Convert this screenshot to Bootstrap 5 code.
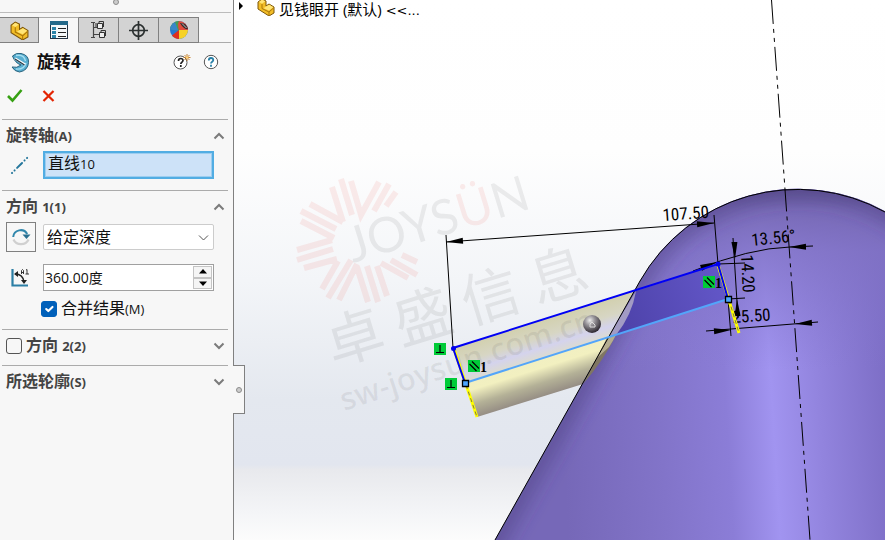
<!DOCTYPE html>
<html lang="zh-CN">
<head>
<meta charset="utf-8">
<meta name="viewport" content="width=device-width, initial-scale=1">
<title>旋转4</title>
<link href="https://cdn.jsdelivr.net/npm/bootstrap@5.3.0/dist/css/bootstrap.min.css" rel="stylesheet">
<style>
body{font-family:"Open Sans","Noto Sans CJK SC",sans-serif;font-size:16px;line-height:24px;color:#111;background:#fff}
svg{display:block}
.pm{flex:0 0 234px;background:#f7f7f7;border-right:1px solid #808080;z-index:1}
.grip{height:13px;margin-right:2px;border-bottom:1px solid #bcbcbc}
.dot{width:6px;height:6px;border-radius:50%;background:#ccc;border:1px solid #8c8c8c}
.grip .dot{margin-top:-1px}
.tabs{margin:4px 2px 0 0;border-bottom:1px solid #ababab}
.tabs button{width:40px;height:26px;margin-bottom:-1px;padding:0;border:1px solid #808080;border-left:0;background:#d3d3d3}
.tabs button:first-child{width:39px}
.tabs .on{background:#f7f7f7;border-bottom-color:#f7f7f7;border-top-color:#aaa}
.feat{padding:0 14px 0 10px;height:38px}
.feat h1{font-size:17px;line-height:24px;margin:0 0 0 7px;font-weight:700;color:#111}
.plain{border:0;background:none;padding:0}
.newhelp{margin-right:12px}
.acts{padding:7px 0 0 7px;height:38px}
.sec{margin:0 5px 0 2px;border-top:1px solid #ababab}
.sec .head{height:31px;padding:0 3px 0 4px;color:#444;font-weight:700;font-size:16px;width:100%;text-align:left}
.sm{font-size:13px}
.line{padding:0 14px 0 4px}
.tool{width:30px;height:30px;border:1px solid #808080;background:#f7f7f7;padding:0}
.ico{flex:0 0 30px}
.field{margin-left:7px;min-width:0}
.pick{height:28px;border:2px solid #52ade3;box-shadow:inset 0 0 0 1px #9ccdf0;background:#cde2f8;padding:0 3px;line-height:20px}
.below{padding-bottom:11px}
.form-select.depth{height:26px;border:1px solid #ccc;border-radius:2px;padding:0 24px 0 3px;font-size:16px;line-height:22px;color:#111;background-size:11px 11px;background-position:right 4px center;background-image:url("data:image/svg+xml,%3csvg xmlns='http://www.w3.org/2000/svg' viewBox='0 0 11 11'%3e%3cpath d='M1 3.500l4.500 4.500L10 3.500' fill='none' stroke='%23555'/%3e%3c/svg%3e")}
.spin{height:27px;border:1px solid #a0a0a0;background:#fff}
.spin input{border:0;background:none;min-width:0;padding:0 1px;font-size:14px;color:#111}
.spin .steps{width:21px;padding:1px}
.spin .steps button{height:12px;border:1px solid #c4c4c4;background:#f5f5f5;padding:0;line-height:1}
.form-check-input.box{width:16px;height:16px;margin:0;border:1px solid #555;border-radius:3px;background-color:#f7f7f7}
.form-check-input.box:checked{background-color:#0060ba;border-color:#0060ba}
.merge{padding:5px 0 8px 39px}
.flap{top:365px;right:-12px;width:12px;height:49px;background:#f7f7f7;border:1px solid #808080;border-left:0}
.tree{top:0;left:4px;font-size:15px;line-height:18px;color:#000;white-space:nowrap}
.tree .name{margin-left:4px}
.tree .more{font-family:"DejaVu Sans",sans-serif;font-size:13px}
.tree .piece{margin:0 0 0 13px}
.view{background:linear-gradient(#fff 0,#fefefe 28%,#f3f5f8 52%,#e4e8ef 74%,#e2e6ef 86%,#e8e9ed 87%,#f4f5f7 95%,#fcfcfc 100%);min-width:0}
.dim{font-family:"Liberation Sans Narrow","Roboto Condensed","DejaVu Sans Condensed",sans-serif;font-size:17px;fill:#000}
</style>
</head>
<body>
<svg width="0" height="0" class="position-absolute" aria-hidden="true">
<symbol id="part" viewBox="0 0 18 18"><path d="M1 4l4-3 4 2v5l3-2 5 3v6l-5 3L1 11z" fill="#f2bd27" stroke="#7d5608"/><path d="M2 4l3-2.300 3.300 1.500L5 5.700zM6.500 10.200l3-2 2.800-1.400 4 2.400-4.300 3.300z" fill="#ffe577"/><path d="M5 6v4.500l7 3.500v3.500M12 14l4.500-4" fill="none" stroke="#a97608"/></symbol>
<symbol id="up" viewBox="0 0 12 8"><path d="M1.500 6.500L6 2l4.500 4.500" fill="none" stroke="#7b7b7b" stroke-width="2"/></symbol>
<symbol id="down" viewBox="0 0 12 8"><path d="M1.500 1.500L6 6l4.500-4.500" fill="none" stroke="#7b7b7b" stroke-width="2"/></symbol>
</svg>
<div class="d-flex vh-100 overflow-hidden">
<aside class="pm position-relative">
  <div class="grip d-flex justify-content-center"><span class="dot"></span></div>
  <div class="tabs d-flex" role="tablist">
    <button role="tab" aria-label="设计树"><svg class="mx-auto" width="19" height="19"><use href="#part"/></svg></button>
    <button role="tab" class="on" aria-label="属性"><svg class="mx-auto" width="20" height="20" viewBox="0 0 20 20"><rect x="1.500" y="1.500" width="17" height="17" fill="#f4f8fa" stroke="#234"/><path d="M1 1h18v4H1z" fill="#23698a"/><path d="M3 7h4v3H3zM3 11h4v3H3zM3 15h4v3H3z" fill="#2b83a8"/><path d="M9 8.500h8M9 12.500h8M9 16.500h8" stroke="#222"/></svg></button>
    <button role="tab" aria-label="配置"><svg class="mx-auto" width="18" height="20" viewBox="0 0 18 20"><path d="M1 2.500h4M1 17.500h4M3.500 2v16M3.500 7.500h5M3.500 14.500h6M6 3v4" fill="none" stroke="#444" stroke-width="1.200"/><path d="M7.500 3.500h5v5h-5zM9.500 12.500h5v5h-5z" fill="#eee" stroke="#333"/><path d="M9 3V1.500h4.500V7M11 12v-1.500h4.500V16" fill="none" stroke="#333"/></svg></button>
    <button role="tab" aria-label="尺寸"><svg class="mx-auto" width="19" height="19" viewBox="0 0 19 19"><circle cx="9.500" cy="9.500" r="5.800" fill="none" stroke="#2b3030" stroke-width="1.700"/><path d="M9.500 0v19M0 9.500h19" stroke="#2b3030" stroke-width="1.700"/></svg></button>
    <button role="tab" aria-label="外观"><svg class="mx-auto" width="20" height="20" viewBox="0 0 20 20"><circle cx="10" cy="10" r="9" fill="#2879d0"/><path d="M10 1a9 9 0 0 0-9 8q5 2 9 1z" fill="#4a9b53"/><path d="M6 2q-4 2-5 7 4 2 8 1z" fill="#3a86c8"/><path d="M10 1a9 9 0 0 1 9 9l-9 0Q8 5 10 1z" fill="#e14b3b"/><path d="M19 10a9 9 0 0 1-9 9V10z" fill="#f6d226"/><path d="M3 15.500a9 9 0 0 0 7 3.500v-9z" fill="#e02f1e"/><path d="M11 3q6-1 8 6-4 1-8-6z" fill="#392b2b"/><path d="M13 3.500l4.500 4.500" stroke="#bbb"/></svg></button>
  </div>
  <div class="feat d-flex align-items-center">
    <svg width="20" height="21" viewBox="0 0 20 21"><path d="M2.500 4Q6 .5 11 1.500q8 1.500 7.500 9-.5 8-9 9.500-5-.5-7.500-5 5 1.500 9-2Q5 11 2.500 4z" fill="#58aed0" stroke="#28627d"/><path d="M6 3.500q8-1.500 9.500 5.500M6 17q8 1 10-6" fill="none" stroke="#a5def0" stroke-width="1.300"/><path d="M5 6.500l10 6" stroke="#fff" stroke-width="2.500"/><path d="M5 7l9.500 6" stroke="#263642" stroke-width="1.200"/></svg>
    <h1>旋转4</h1>
    <button class="plain newhelp ms-auto" aria-label="新增帮助"><svg width="18" height="18" viewBox="0 0 18 18"><circle cx="7.500" cy="9.500" r="6.500" fill="#fff" stroke="#555"/><path d="M5.500 8q0-2.500 2.200-2.500T10 7.500c0 1.500-2.200 1.700-2.200 3.500M7.800 12v2" fill="none" stroke="#222" stroke-width="1.700"/><path d="M14 1v7M10.500 4.500h7M11.500 2l5 5M16.500 2l-5 5" stroke="#bd7420" stroke-width=".9"/><circle cx="14" cy="4.500" r="1.300" fill="#ffd37a"/></svg></button>
    <button class="plain" aria-label="帮助"><svg width="16" height="16" viewBox="0 0 16 16"><circle cx="8" cy="8" r="6.700" fill="#fff" stroke="#555"/><path d="M5.800 6.500Q5.800 4 8 4t2.300 2.100C10.300 7.600 8 7.800 8 9.500M8 10.700v2" fill="none" stroke="#2980a7" stroke-width="1.800"/></svg></button>
  </div>
  <div class="acts d-flex align-items-start">
    <button class="plain" aria-label="确定"><svg width="16" height="15" viewBox="0 0 16 15"><path d="M1 8l4.500 4.500L14.500 2" fill="none" stroke="#36a012" stroke-width="2.600"/></svg></button>
    <button class="plain ms-3" aria-label="取消"><svg width="18" height="15" viewBox="0 0 18 15"><path d="M4.500 3l10 10M14.500 3l-10 10" stroke="#e32402" stroke-width="2.200"/></svg></button>
  </div>

  <section class="sec below">
    <button class="plain head d-flex align-items-center"><span>旋转轴<span class="sm">(A)</span></span><svg class="ms-auto" width="12" height="8"><use href="#up"/></svg></button>
    <div class="line d-flex align-items-center">
      <span class="ico"><svg class="ms-1" width="20" height="20" viewBox="0 0 20 20"><path d="M2 18L19 1" stroke="#25779c" stroke-width="2" stroke-linecap="round" stroke-dasharray=".1 3.500 .1 3.500 7 3.500 .1 3.500 .1 9"/></svg></span>
      <div class="field pick flex-fill" role="listbox" tabindex="0" aria-label="旋转轴"><span role="option" aria-selected="true">直线<span class="sm">10</span></span></div>
    </div>
  </section>

  <section class="sec">
    <button class="plain head d-flex align-items-center"><span>方向 <span class="sm">1(1)</span></span><svg class="ms-auto" width="12" height="8"><use href="#up"/></svg></button>
    <div class="line d-flex align-items-center">
      <button class="tool flex-shrink-0" aria-label="反向"><svg class="mx-auto" width="20" height="20" viewBox="0 0 20 20"><path d="M2.500 12.500a8 7 0 0 0 15 0" fill="none" stroke="#d0d0d0" stroke-width="2.200"/><path d="M2.200 10a7.500 7.500 0 0 1 14-3" fill="none" stroke="#3187ac" stroke-width="2"/><path d="M11.500 7.500h8l-4 4.500z" fill="#2a6f90"/></svg></button>
      <select class="form-select depth field flex-fill w-auto" aria-label="终止条件"><option>给定深度</option></select>
    </div>
    <div class="line d-flex align-items-center mt-2 pt-1">
      <label class="ico" for="ang" aria-label="角度"><svg class="ms-1" width="20" height="20" viewBox="0 0 20 20"><path d="M2.500 1v16.500H18" fill="none" stroke="#2c7fa5" stroke-width="2.200"/><path d="M5 6q8 0 9 8" fill="none" stroke="#222" stroke-width="1.500"/><path d="M4 6l4-3v6zM11 12h6l-3 4z" fill="#222"/><path d="M11.500 6V2.500l1-1 1 1V6M11.500 4.500h2M16 2l1-.5V6M15.500 6H19" fill="none" stroke="#222" stroke-width=".9"/></svg></label>
      <div class="field spin d-flex flex-fill">
        <input id="ang" class="flex-fill w-100" type="text" value="360.00度">
        <div class="steps d-flex flex-column flex-shrink-0 justify-content-between"><button aria-label="增加"><svg class="mx-auto" width="8" height="5"><path d="M0 4.500L4 0l4 4.500z"/></svg></button><button aria-label="减少"><svg class="mx-auto" width="8" height="5"><path d="M0 .5L4 5 8 .5z"/></svg></button></div>
      </div>
    </div>
    <div class="merge d-flex align-items-center"><input class="form-check-input box" type="checkbox" id="merge" checked><label class="ms-1" for="merge">合并结果<span class="sm">(M)</span></label></div>
  </section>

  <section class="sec pb-1">
    <div class="head d-flex align-items-center"><input class="form-check-input box" type="checkbox" id="dir2"><label class="ms-1" for="dir2">方向 <span class="sm">2(2)</span></label><button class="plain ms-auto" aria-label="展开方向 2"><svg width="12" height="8"><use href="#down"/></svg></button></div>
  </section>
  <section class="sec">
    <button class="plain head d-flex align-items-center"><span>所选轮廓<span class="sm">(S)</span></span><svg class="ms-auto" width="12" height="8"><use href="#down"/></svg></button>
  </section>
  <div class="flap position-absolute d-flex align-items-center justify-content-center"><span class="dot"></span></div>
</aside>

<main class="view flex-fill position-relative">
<svg class="w-100 h-100" viewBox="234 0 651 540" preserveAspectRatio="xMinYMin slice" role="img" aria-label="旋转预览">
<defs>
<linearGradient id="bodyFill" gradientUnits="userSpaceOnUse" x1="560" y1="400" x2="890" y2="380"><stop offset="0" stop-color="#7668b8"/><stop offset=".3" stop-color="#8274c9"/><stop offset=".5" stop-color="#8b7dd7"/><stop offset=".64" stop-color="#a194f0"/><stop offset=".78" stop-color="#9284de"/><stop offset="1" stop-color="#7c6dc5"/></linearGradient>
<linearGradient id="dome" gradientUnits="userSpaceOnUse" x1="780" y1="188" x2="780" y2="370"><stop offset="0" stop-color="#63589a"/><stop offset=".12" stop-color="#7668b4" stop-opacity=".95"/><stop offset=".35" stop-color="#8072c4" stop-opacity=".75"/><stop offset="1" stop-color="#8678d0" stop-opacity="0"/></linearGradient>
<linearGradient id="tube" gradientUnits="userSpaceOnUse" x1="453" y1="348" x2="475" y2="418"><stop offset="0" stop-color="#d2d0ae"/><stop offset=".22" stop-color="#d7d6c4"/><stop offset=".36" stop-color="#d4d3ed"/><stop offset=".49" stop-color="#dcdbd0"/><stop offset=".5" stop-color="#f1efc2"/><stop offset=".62" stop-color="#f2f0c0"/><stop offset=".82" stop-color="#b4b197"/><stop offset="1" stop-color="#958d84"/></linearGradient>
<linearGradient id="sketch" gradientUnits="userSpaceOnUse" x1="620" y1="330" x2="728" y2="290"><stop offset="0" stop-color="#4d42a9"/><stop offset="1" stop-color="#6357c8"/></linearGradient>
<radialGradient id="ball" cx=".38" cy=".3" r=".7"><stop offset="0" stop-color="#eee"/><stop offset=".4" stop-color="#969398"/><stop offset="1" stop-color="#2f2a32"/></radialGradient>
<filter id="soft" x="-20%" y="-20%" width="140%" height="140%"><feGaussianBlur stdDeviation="10"/></filter>
<path id="shape" d="M491 547L640 281A181 181 0 0 1 890 214V547z"/>
<clipPath id="inside"><use href="#shape"/></clipPath>
<path id="arrow" d="M0 0L17-3V3z"/>
<g id="perp"><rect width="12" height="12" fill="#00cb38"/><path d="M6 2v8M2 9.500h8" stroke="#000" stroke-width="1.200"/></g>
<g id="para"><rect width="12" height="12" fill="#00cb38"/><path d="M1.500 4l7 7M4 1.500l7 7" stroke="#000" stroke-width="1.200"/></g>
</defs>

<path d="M453 348L638 289L583 384L477 417z" fill="url(#tube)"/>
<use href="#shape" fill="url(#bodyFill)"/>
<use href="#shape" fill="url(#dome)"/>
<g clip-path="url(#inside)"><path d="M481 565L640 281A181 181 0 0 1 920 235" fill="none" stroke="#433877" stroke-opacity=".6" stroke-width="16" filter="url(#soft)"/></g>
<path d="M636 291L718 264L728 299L616 335Q630 312 636 291z" fill="url(#sketch)"/>
<path d="M636 291Q632 315 616 335L607 339z" fill="#a29bc4"/>
<path d="M616 335Q604 360 583 384L607 338z" fill="#7f7662"/>
<path d="M616 335Q613 341 609 347L597 358L607 338z" fill="#b5ad90"/>
<path d="M495 540L640 281A181 181 0 0 1 885 212" fill="none" stroke="#000"/>

<g stroke="#e83a30" stroke-opacity=".09" stroke-width="6" fill="none">
<path d="M332 187l11 35M341 179l11 36M351 181l10 34l18-33M389 184l-15 27M396 192l-10 14M310 204l33 18M301 211l35 18M301 221l33 17M297 250l35-10M297 260l36-11M304 268l33-9M322 289l16-28M328 298l23-38M339 300l18-36M357 267l11 35M367 266l11 36M377 266l10 30M381 263l27 15M391 260l26 15M402 255l15 7"/></g>
<g fill="#464646" fill-opacity=".09">
<text transform="translate(353 263) rotate(-17)" font-family="Lato" font-weight="400" font-size="49">JOYS<tspan fill="#e83a30">Ü</tspan>N</text>
<text transform="translate(333 366) rotate(-17)" font-family="Noto Sans CJK SC" font-size="58">卓 盛 信 息</text>
<text transform="translate(344 411) rotate(-18)" font-family="Open Sans" font-weight="600" font-size="31">sw-joysun.com.cn</text>
</g>

<g stroke="#000" fill="none">
<path d="M771.500 0L810 540" stroke-dasharray="24 5 4 5 4 5"/>
<path d="M446 235L453 348M446 242L714 223M714 215L718 264M693 271Q750 248 790 247L813 246M733 238L738 318M718 264L745 263M728 299L745 298M728 299L731 336M706 331L818 322"/>
</g>
<use href="#arrow" transform="translate(446 242) rotate(-4)"/>
<use href="#arrow" transform="translate(714 223) rotate(176)"/>
<use href="#arrow" transform="translate(717 262) rotate(160)"/>
<use href="#arrow" transform="translate(789 247) rotate(-1)"/>
<use href="#arrow" transform="translate(735 259) rotate(-92)"/>
<use href="#arrow" transform="translate(737 299) rotate(88)"/>
<use href="#arrow" transform="translate(731 330) rotate(176)"/>
<use href="#arrow" transform="translate(795 324) rotate(-4)"/>
<text class="dim" transform="translate(663 221) rotate(-4)">107.50</text>
<text class="dim" transform="translate(752 246) rotate(-6)">13.56°</text>
<text class="dim" transform="translate(741 255) rotate(87)">14.20</text>
<text class="dim" transform="translate(733 323) rotate(-4)">25.50</text>

<g fill="none" stroke-width="2">
<path d="M454 349L477 417M718 265L739 333" stroke="#ff0" stroke-width="3"/>
<path d="M466 385L477 417M729 300L739 333" stroke="#817a45" stroke-width="1" stroke-dasharray="4 3"/>
<path d="M465 383L728 299" stroke="#53a5fa"/>
<path d="M465 383L453 348L718 264L728 299" stroke="#0000f5"/>
</g>
<circle cx="453.500" cy="348.500" r="2.500" fill="#00e"/><circle cx="718" cy="264" r="2.500" fill="#00e"/>
<path d="M462.500 380.500h6v6h-6zM725.500 296.500h6v6h-6z" fill="#4da6ff" stroke="#000" stroke-width="1.300"/>
<use href="#perp" x="434" y="343"/><use href="#perp" x="445" y="378"/><use href="#para" x="468" y="360"/><use href="#para" x="703" y="276"/>
<g font-family="Liberation Serif" font-weight="700" font-size="14"><text x="480" y="372">1</text><text x="715" y="288">1</text></g>
<circle cx="592" cy="324" r="9" fill="url(#ball)"/><path d="M590 327v-3l2-2 3 3v2z" fill="none" stroke="#ddd"/>
</svg>
<div class="tree position-absolute d-flex">
  <svg width="6" height="12" viewBox="0 0 6 12"><path d="M1 2l4 4-4 4z"/></svg>
  <svg class="piece" width="18" height="17"><use href="#part" y="-2" width="18" height="18"/></svg>
  <span class="name">见钱眼开 (默认) <span class="more">&lt;&lt;...</span></span>
</div>
</main>
</div>
<script src="https://cdn.jsdelivr.net/npm/bootstrap@5.3.0/dist/js/bootstrap.bundle.min.js"></script>
</body>
</html>
